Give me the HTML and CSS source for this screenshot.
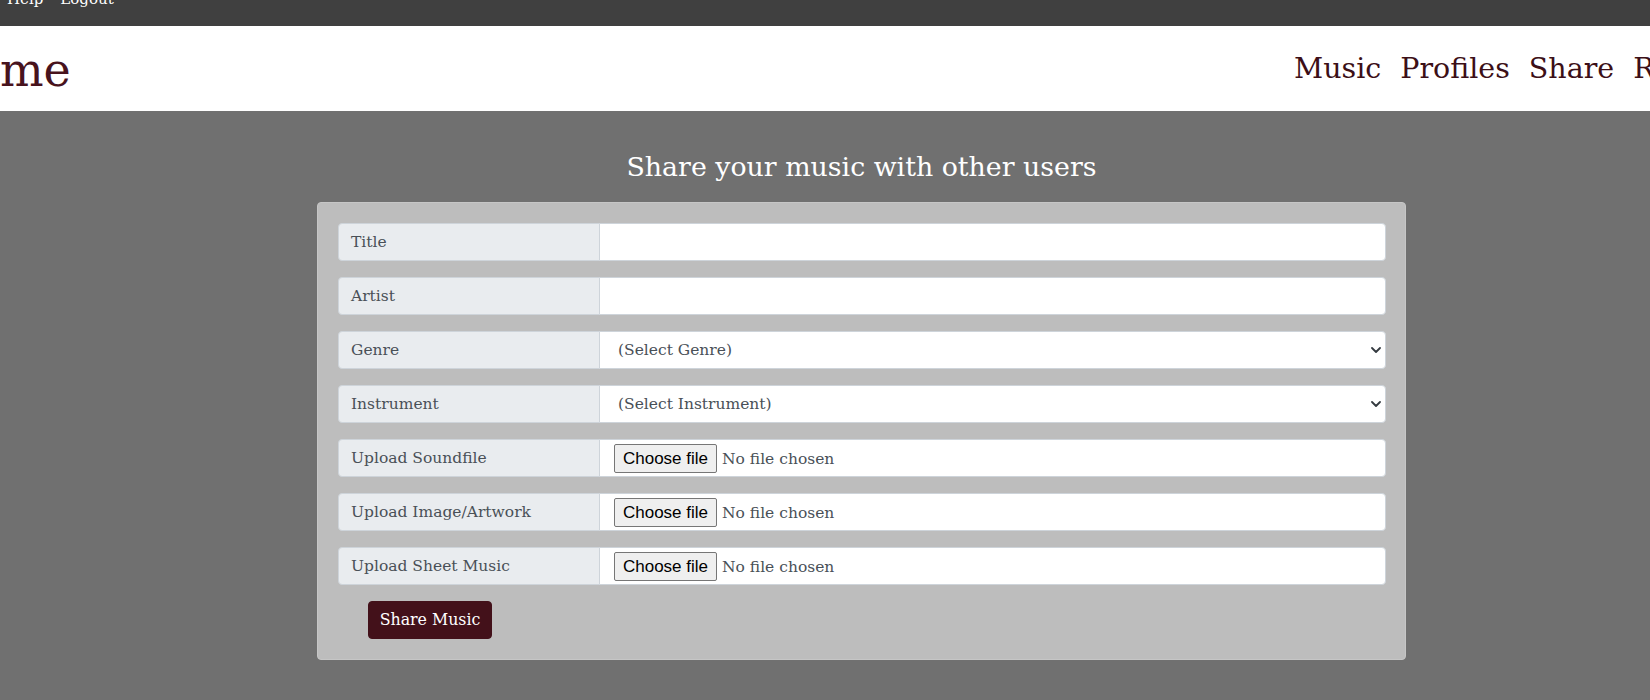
FILE: index.html
```html
<!DOCTYPE html>
<html lang="en">
<head>
<meta charset="utf-8">
<title>Share Music</title>
<link rel="stylesheet" href="styles.css">
</head>
<body>
  <div class="topbar">
    <a class="toplink" href="#">Help</a>
    <a class="toplink" href="#">Logout</a>
  </div>
  <header class="header">
    <div class="brand">me</div>
    <nav class="nav">
      <a href="#">Music</a>
      <a href="#">Profiles</a>
      <a href="#">Share</a>
      <a href="#">Register</a>
    </nav>
  </header>
  <main class="main">
    <div class="panel-wrap">
      <h1 class="title">Share your music with other users</h1>
      <form class="card">
        <div class="row">
          <span class="label">Title</span>
          <input class="control" type="text">
        </div>
        <div class="row">
          <span class="label">Artist</span>
          <input class="control" type="text">
        </div>
        <div class="row">
          <span class="label">Genre</span>
          <div class="select-wrap">
            <select class="control select"><option>(Select Genre)</option></select>
            <svg class="chev" width="10" height="6" viewBox="0 0 10 6"><path d="M1 1l4 4 4-4" fill="none" stroke="#343a40" stroke-width="1.8" stroke-linecap="round" stroke-linejoin="round"/></svg>
          </div>
        </div>
        <div class="row">
          <span class="label">Instrument</span>
          <div class="select-wrap">
            <select class="control select"><option>(Select Instrument)</option></select>
            <svg class="chev" width="10" height="6" viewBox="0 0 10 6"><path d="M1 1l4 4 4-4" fill="none" stroke="#343a40" stroke-width="1.8" stroke-linecap="round" stroke-linejoin="round"/></svg>
          </div>
        </div>
        <div class="row">
          <span class="label">Upload Soundfile</span>
          <label class="control file">
            <input class="file-input" type="file">
            <span class="file-btn">Choose file</span>
            <span class="file-name">No file chosen</span>
          </label>
        </div>
        <div class="row">
          <span class="label">Upload Image/Artwork</span>
          <label class="control file">
            <input class="file-input" type="file">
            <span class="file-btn">Choose file</span>
            <span class="file-name">No file chosen</span>
          </label>
        </div>
        <div class="row">
          <span class="label">Upload Sheet Music</span>
          <label class="control file">
            <input class="file-input" type="file">
            <span class="file-btn">Choose file</span>
            <span class="file-name">No file chosen</span>
          </label>
        </div>
        <div class="actions">
          <button class="btn" type="button">Share Music</button>
        </div>
      </form>
    </div>
  </main>
</body>
</html>
```
FILE: styles.css
```css
* { box-sizing: border-box; }
html, body { margin: 0; padding: 0; }
body {
  font-family: "DejaVu Serif", "Liberation Serif", serif;
  background: #707070;
  min-height: 700px;
  overflow: hidden;
}
.topbar {
  background: #404040;
  height: 26px;
  display: flex;
  gap: 17px;
  padding-left: 7px;
  overflow: hidden;
}
.toplink {
  color: #ffffff;
  text-decoration: none;
  font-size: 15px;
  line-height: 20px;
  margin-top: -11px;
}
.header {
  background: #ffffff;
  height: 85px;
  display: flex;
  align-items: flex-start;
  overflow: hidden;
  white-space: nowrap;
}
.brand {
  flex: 0 0 1294px;
  color: #48131d;
  font-size: 46px;
  line-height: 46px;
  margin-top: 21px;
}
.nav {
  display: flex;
  gap: 19px;
  margin-top: 28px;
  flex: none;
}
.nav a {
  color: #3c0f17;
  text-decoration: none;
  font-size: 28.5px;
  line-height: 30px;
}
.main {
  padding-top: 40px;
  padding-left: 317px;
  padding-bottom: 40px;
}
.panel-wrap { width: 1089px; }
.title {
  margin: 0 0 19px 0;
  text-align: center;
  color: #ffffff;
  font-weight: normal;
  font-size: 26.8px;
  line-height: 32.4px;
}
.card {
  background: #bdbdbd;
  border: 1px solid #c6c6c6;
  border-radius: 4px;
  padding: 20px 19px 20px 20px;
}
.row {
  display: flex;
  height: 38px;
  margin-bottom: 16px;
}
.label {
  flex: 0 0 262px;
  background: #e9ecef;
  border: 1px solid #ced4da;
  border-radius: 4px 0 0 4px;
  color: #495057;
  font-size: 15.5px;
  line-height: 24px;
  padding: 6px 12px;
  white-space: nowrap;
}
.control {
  flex: 1 1 auto;
  min-width: 0;
  margin: 0 0 0 -1px;
  height: 38px;
  background: #ffffff;
  border: 1px solid #ced4da;
  border-radius: 0 4px 4px 0;
  font-family: "DejaVu Serif", "Liberation Serif", serif;
  font-size: 15.5px;
  color: #495057;
  outline: none;
}
input.control[type="text"] { padding: 6px 12px; }
.select-wrap {
  flex: 1 1 auto;
  display: flex;
  position: relative;
  margin-left: -1px;
}
.select {
  margin: 0;
  width: 100%;
  appearance: none;
  -webkit-appearance: none;
  padding: 6px 36px 6px 18px;
}
.chev {
  position: absolute;
  right: 5px;
  top: 16px;
  pointer-events: none;
}
.file {
  display: flex;
  align-items: center;
  padding: 0 14px;
  gap: 5px;
  cursor: pointer;
}
.file-input { display: none; }
.file-btn {
  font-family: "Liberation Sans", Arial, sans-serif;
  font-size: 17px;
  line-height: 27px;
  height: 29px;
  width: 103px;
  text-align: center;
  background: #efefef;
  color: #000000;
  border: 1px solid #767676;
  border-radius: 2px;
  margin-top: 1px;
}
.file-name {
  color: #495057;
  font-size: 15.5px;
  margin-top: 2px;
}
.actions {
  padding-left: 30px;
}
.btn {
  display: block;
  background: #43111a;
  color: #ffffff;
  border: 1px solid #43111a;
  border-radius: 4px;
  font-family: "DejaVu Serif", "Liberation Serif", serif;
  font-size: 15.8px;
  line-height: 24px;
  height: 38px;
  width: 124px;
  padding: 6px 0;
}
```
